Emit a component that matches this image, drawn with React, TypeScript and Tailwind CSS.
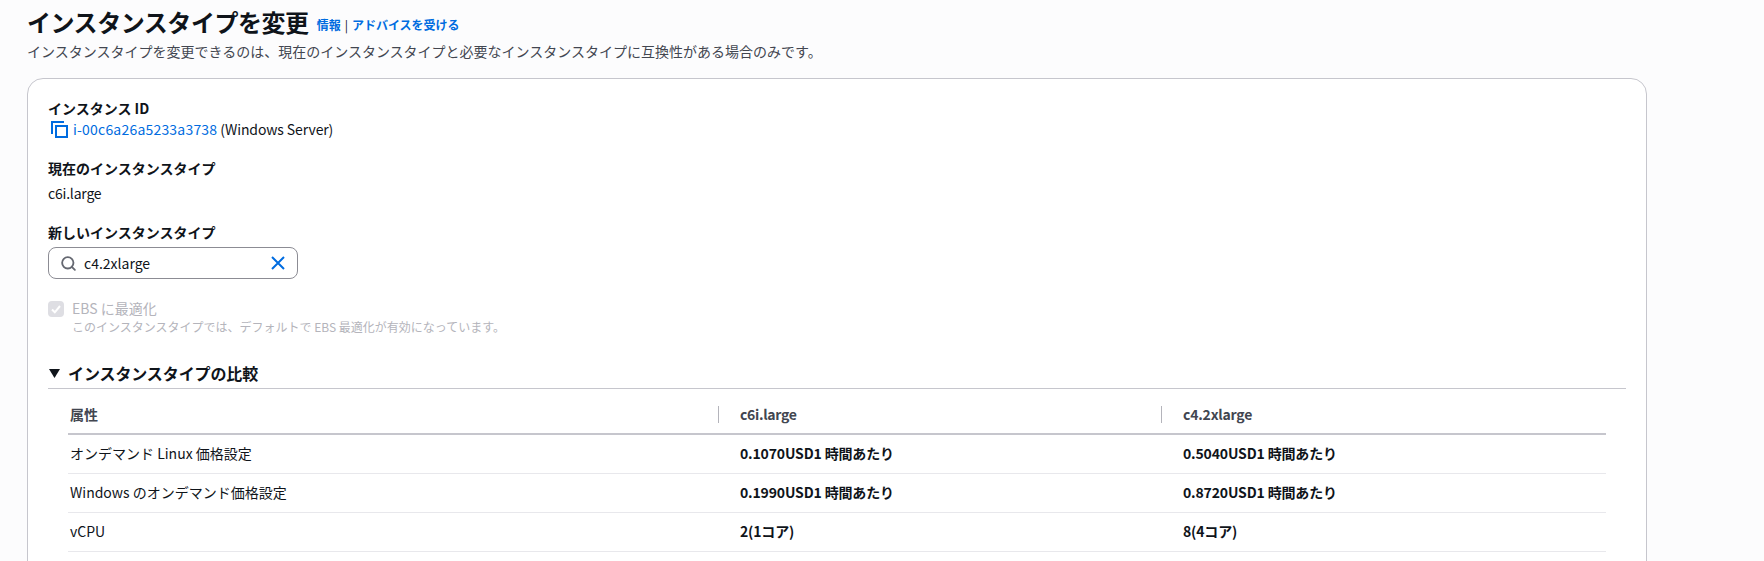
import { Search } from 'lucide-react';

const font = '[font-family:"Noto_Sans_CJK_JP","Noto_Sans",sans-serif]';

const rows = [
    { name: 'オンデマンド Linux 価格設定', current: '0.1070USD1 時間あたり', next: '0.5040USD1 時間あたり' },
    { name: 'Windows のオンデマンド価格設定', current: '0.1990USD1 時間あたり', next: '0.8720USD1 時間あたり' },
    { name: 'vCPU', current: '2(1コア)', next: '8(4コア)' },
];

function CopyIcon() {
    return (
        <svg width="17" height="17" viewBox="0 0 17 17" fill="none" stroke="#006ce0" strokeWidth="2">
            <path d="M1 13V1h12" />
            <rect x="5" y="5" width="11" height="11" />
        </svg>
    );
}

function ClearIcon() {
    return (
        <svg width="14" height="14" viewBox="0 0 14 14" fill="none" stroke="#006ce0" strokeWidth="2">
            <path d="M1 1l12 12M13 1L1 13" />
        </svg>
    );
}

export default function App() {
    return (
        <div className={`h-[561px] overflow-hidden bg-[#fcfcfd] pl-[27px] text-[#0f141a] ${font}`}>
            {/* Page header */}
            <div className="flex h-[38px] items-end pt-[6px]">
                <h1 className="text-[24px] font-bold leading-[32px] tracking-[-0.45px]">インスタンスタイプを変更</h1>
                <div className="mb-[3px] ml-2 text-[12px] font-bold leading-[20px]">
                    <span className="text-[#006ce0]">情報</span>
                    <span className="mx-1 font-normal">|</span>
                    <span className="text-[#006ce0]">アドバイスを受ける</span>
                </div>
            </div>
            <p className="mt-[3px] text-[14px] leading-[20px] text-[#424650]">
                インスタンスタイプを変更できるのは、現在のインスタンスタイプと必要なインスタンスタイプに互換性がある場合のみです。
            </p>

            {/* Card */}
            <div className="mt-[17px] h-[600px] w-[1620px] rounded-[16px] border border-[#c6c6cd] bg-white pl-[20px] pr-[20px] pt-[19px]">
                <div className="text-[14px] font-bold leading-[20px]">インスタンス ID</div>
                <div className="mt-[1px] flex h-[20px] items-center text-[14px] leading-[20px]">
                    <span className="ml-[3px] mr-[5px] flex items-center"><CopyIcon /></span>
                    <span className="tracking-[0.2px] text-[#006ce0]">i-00c6a26a5233a3738</span>
                    <span className="ml-[3px] tracking-[-0.1px]">(Windows Server)</span>
                </div>

                <div className="mt-[19px] text-[14px] font-bold leading-[20px]">現在のインスタンスタイプ</div>
                <div className="mt-[5px] text-[14px] leading-[20px] tracking-[-0.2px]">c6i.large</div>

                <div className="mt-[19px] text-[14px] font-bold leading-[20px]">新しいインスタンスタイプ</div>
                <div className="mt-[5px] flex h-[32px] w-[250px] items-center rounded-[8px] border border-[#8c8c94] bg-white pl-[11px] pr-[12px]">
                    <Search size={17} strokeWidth={2.6} className="text-[#656871]" />
                    <span className="ml-[7px] flex-1 text-[14px] leading-[20px]">c4.2xlarge</span>
                    <ClearIcon />
                </div>

                {/* Disabled checkbox */}
                <div className="mt-[22px] flex">
                    <div className="flex h-[16px] w-[16px] items-center justify-center rounded-[4px] bg-[#dedee3]">
                        <svg width="12" height="12" viewBox="0 0 12 12" fill="none" stroke="#fff" strokeWidth="2">
                            <path d="M2 6.5l2.8 2.8L10 3" />
                        </svg>
                    </div>
                    <div className="ml-[8px]">
                        <div className="-mt-[1px] text-[14px] leading-[16px] text-[#b4b4bb]">EBS に最適化</div>
                        <div className="mt-[3px] text-[12px] leading-[16px] text-[#b4b4bb]">
                            このインスタンスタイプでは、デフォルトで EBS 最適化が有効になっています。
                        </div>
                    </div>
                </div>

                {/* Comparison section */}
                <div className="mt-[26px] w-[1578px] border-b border-[#c6c6cd] pb-[3px]">
                    <div className="flex h-[24px] items-center text-[16px] font-bold leading-[24px] tracking-[-0.1px]">
                        <svg width="11" height="9" viewBox="0 0 10 8" className="ml-[1px] mr-[8px]" fill="#0f141a">
                            <path d="M0 0h10L5 8z" />
                        </svg>
                        インスタンスタイプの比較
                    </div>
                </div>

                <div className="ml-[20px] w-[1538px] text-[14px]">
                    <div className="grid h-[46px] grid-cols-[650px_443px_1fr] items-center border-b-2 border-[#c6c6cd] pt-[7px] font-bold text-[#424650]">
                        <div className="pl-[2px]">属性</div>
                        <div className="border-l border-[#b4b4bb] pl-[21px] leading-[17px] tracking-[-0.3px]">c6i.large</div>
                        <div className="border-l border-[#b4b4bb] pl-[21px] leading-[17px] tracking-[-0.2px]">c4.2xlarge</div>
                    </div>
                    {rows.map((row) => (
                        <div key={row.name} className="grid h-[39px] grid-cols-[650px_443px_1fr] items-center border-b border-[#e8e8ec] pb-[1px]">
                            <div className="pl-[2px]">{row.name}</div>
                            <div className="pl-[22px] font-bold tracking-[-0.15px]">{row.current}</div>
                            <div className="pl-[22px] font-bold tracking-[-0.15px]">{row.next}</div>
                        </div>
                    ))}
                </div>
            </div>
        </div>
    );
}
